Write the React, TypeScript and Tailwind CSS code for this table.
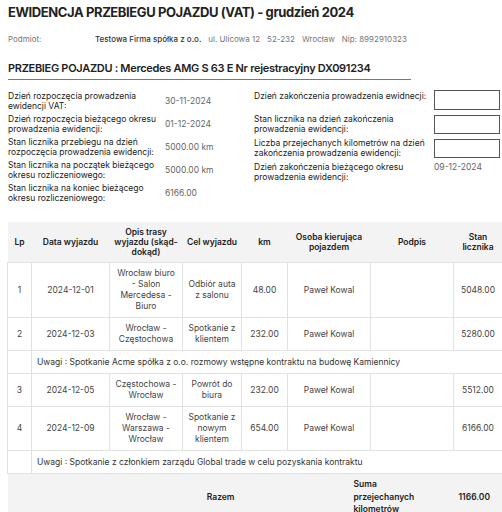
import React from 'react'

const leftInfo = [
  { label: 'Dzień rozpoczęcia prowadzenia ewidencji VAT:', value: '30-11-2024' },
  { label: 'Dzień rozpoczęcia bieżącego okresu prowadzenia ewidencji:', value: '01-12-2024' },
  { label: 'Stan licznika przebiegu na dzień rozpoczęcia prowadzenia ewidencji:', value: '5000.00 km' },
  { label: 'Stan licznika na początek bieżącego okresu rozliczeniowego:', value: '5000.00 km' },
  { label: 'Stan licznika na koniec bieżącego okresu rozliczeniowego:', value: '6166.00' },
]

const trips = [
  {
    lp: '1',
    date: '2024-12-01',
    route: 'Wrocław biuro - Salon Mercedesa - Biuro',
    goal: 'Odbiór auta z salonu',
    km: '48.00',
    driver: 'Paweł Kowal',
    counter: '5048.00',
  },
  {
    lp: '2',
    date: '2024-12-03',
    route: 'Wrocław - Częstochowa',
    goal: 'Spotkanie z klientem',
    km: '232.00',
    driver: 'Paweł Kowal',
    counter: '5280.00',
    note: 'Uwagi : Spotkanie Acme spółka z o.o. rozmowy wstępne kontraktu na budowę Kamiennicy',
  },
  {
    lp: '3',
    date: '2024-12-05',
    route: 'Częstochowa - Wrocław',
    goal: 'Powrót do biura',
    km: '232.00',
    driver: 'Paweł Kowal',
    counter: '5512.00',
  },
  {
    lp: '4',
    date: '2024-12-09',
    route: 'Wrocław - Warszawa - Wrocław',
    goal: 'Spotkanie z nowym klientem',
    km: '654.00',
    driver: 'Paweł Kowal',
    counter: '6166.00',
    note: 'Uwagi : Spotkanie z członkiem zarządu Global trade w celu pozyskania kontraktu',
  },
]

const td = 'border border-[#e2e2e2] px-[4px] py-[5px] text-center align-middle'

export default function App() {
  return (
    <div className="w-[502px] h-[512px] overflow-hidden bg-white font-['Inter',sans-serif] text-[#222]">
      <div className="px-[8px] pt-[2px]">
        <h1 className="text-[13px] leading-[20px] font-bold tracking-[-0.4px]">
          EWIDENCJA PRZEBIEGU POJAZDU (VAT) - grudzień 2024
        </h1>

        <div className="mt-[12px] flex items-center text-[8px] leading-[11px] text-[#777]">
          <span className="w-[87px]">Podmiot:</span>
          <span className="font-medium text-[#333]">Testowa Firma spółka z o.o.</span>
          <span className="ml-[7px]">ul. Ulicowa 12</span>
          <span className="ml-[7px]">52-232</span>
          <span className="ml-[7px]">Wrocław</span>
          <span className="ml-[7px]">Nip: 8992910323</span>
        </div>

        <div className="mt-[15px] w-[403px] border-b border-[#777] pb-[3px]">
          <h2 className="text-[11px] leading-[16px] font-semibold tracking-[-0.3px]">
            PRZEBIEG POJAZDU : Mercedes AMG S 63 E Nr rejestracyjny DX091234
          </h2>
        </div>

        <div className="mt-[11px] flex text-[8.5px] leading-[10px]">
          <div className="w-[246px] shrink-0 flex flex-col gap-[3px]">
            {leftInfo.map((r) => (
              <div key={r.label} className="flex items-center">
                <div className="w-[157px] pr-[6px]">{r.label}</div>
                <div className="text-[#666]">{r.value}</div>
              </div>
            ))}
          </div>

          <div className="-mt-[1px] shrink-0 flex flex-col gap-[4px]">
            <div className="flex items-start">
              <div className="w-[180px] pt-[1px]">Dzień zakończenia prowadzenia ewidnecji:</div>
              <div className="h-[20px] w-[66px] border border-[#555]" />
            </div>
            <div className="flex items-center">
              <div className="w-[180px]">Stan licznika na dzień zakończenia prowadzenia ewidencji:</div>
              <div className="h-[19px] w-[66px] border border-[#555]" />
            </div>
            <div className="flex items-center">
              <div className="w-[180px]">Liczba przejechanych kilometrów na dzień zakończenia prowadzenia ewidencji:</div>
              <div className="h-[19px] w-[66px] border border-[#555]" />
            </div>
            <div className="flex items-start">
              <div className="w-[180px]">Dzień zakończenia bieżącego okresu prowadzenia ewidencji:</div>
              <div className="text-[#666]">09-12-2024</div>
            </div>
          </div>
        </div>
      </div>

      <table className="mt-[19px] ml-[7px] w-[495px] table-fixed border-collapse text-[8.5px] leading-[11px] text-[#444]">
        <colgroup>
          <col className="w-[24px]" />
          <col className="w-[78px]" />
          <col className="w-[73px]" />
          <col className="w-[59px]" />
          <col className="w-[46px]" />
          <col className="w-[83px]" />
          <col className="w-[83px]" />
          <col className="w-[49px]" />
        </colgroup>
        <thead>
          <tr className="bg-[#f3f3f3] text-[#222] font-semibold leading-[10px]">
            <th className="px-[3px] py-[5px] font-semibold">Lp</th>
            <th className="px-[3px] py-[5px] font-semibold">Data wyjazdu</th>
            <th className="px-[3px] py-[5px] font-semibold">Opis trasy wyjazdu (skąd-dokąd)</th>
            <th className="px-[3px] py-[5px] font-semibold">Cel wyjazdu</th>
            <th className="px-[3px] py-[5px] font-semibold">km</th>
            <th className="px-[3px] py-[5px] font-semibold">Osoba kierująca pojazdem</th>
            <th className="px-[3px] py-[5px] font-semibold">Podpis</th>
            <th className="px-[3px] py-[5px] font-semibold">Stan licznika</th>
          </tr>
        </thead>
        <tbody>
          {trips.map((t) => (
            <React.Fragment key={t.lp}>
              <tr>
                <td className={td}>{t.lp}</td>
                <td className={td}>{t.date}</td>
                <td className={td}>{t.route}</td>
                <td className={td}>{t.goal}</td>
                <td className={td}>{t.km}</td>
                <td className={td}>{t.driver}</td>
                <td className={td}></td>
                <td className={td}>{t.counter}</td>
              </tr>
              {t.note && (
                <tr>
                  <td className="border border-[#e2e2e2]"></td>
                  <td colSpan={7} className="border border-[#e2e2e2] px-[5px] py-[5.5px] text-left text-[#333]">
                    {t.note}
                  </td>
                </tr>
              )}
            </React.Fragment>
          ))}
        </tbody>
        <tfoot>
          <tr className="bg-[#f3f3f3] font-semibold text-[#222]">
            <td colSpan={8} className="pt-[4px] pb-[6px]">
              <div className="flex items-center leading-[12.5px]">
                <div className="w-[227px] text-right">Razem</div>
                <div className="ml-[119px] w-[74px]">Suma przejechanych kilometrów</div>
                <div className="ml-[31px]">1166.00</div>
              </div>
            </td>
          </tr>
        </tfoot>
      </table>
    </div>
  )
}
